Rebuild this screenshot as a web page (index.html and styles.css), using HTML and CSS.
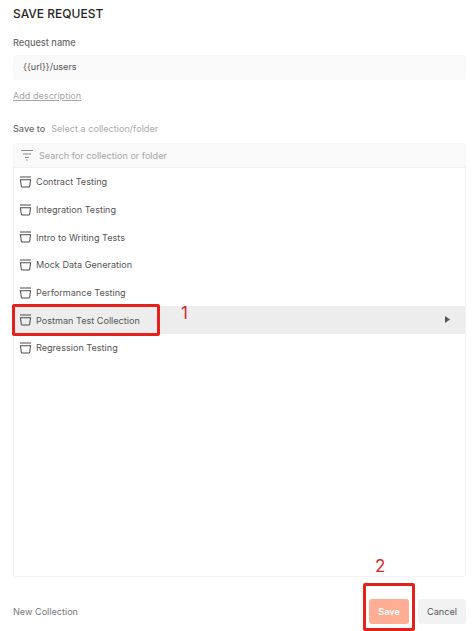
FILE: index.html
```html
<!DOCTYPE html>
<html lang="en">
<head>
<meta charset="utf-8">
<title>Save Request</title>
<link rel="stylesheet" href="styles.css">
</head>
<body>
<main class="dialog">
  <h1 class="title">SAVE REQUEST</h1>
  <label class="label">Request name</label>
  <div class="name-input">{{url}}/users</div>
  <a class="add-desc">Add description</a>
  <div class="save-to"><span class="save-label">Save to</span><span class="save-hint">Select a collection/folder</span></div>
  <section class="picker">
    <div class="search">
      <svg class="filter" width="14" height="12" viewBox="0 0 14 12"><path d="M1 1.5h12M3 5h8M5 8.5h4M6.2 11h1.6" fill="none" stroke="#8a8a8a" stroke-width="1"/></svg>
      <span>Search for collection or folder</span>
    </div>
    <ul class="list">
      <li class="row"><svg class="icon" viewBox="0 0 14 13"><path d="M1 1h12M1.5 4h11l-1 7.2a1 1 0 0 1-1 .8h-7a1 1 0 0 1-1-.8z" fill="none" stroke="#4d4d4d" stroke-width="1.1"/></svg>Contract Testing</li>
      <li class="row"><svg class="icon" viewBox="0 0 14 13"><path d="M1 1h12M1.5 4h11l-1 7.2a1 1 0 0 1-1 .8h-7a1 1 0 0 1-1-.8z" fill="none" stroke="#4d4d4d" stroke-width="1.1"/></svg>Integration Testing</li>
      <li class="row"><svg class="icon" viewBox="0 0 14 13"><path d="M1 1h12M1.5 4h11l-1 7.2a1 1 0 0 1-1 .8h-7a1 1 0 0 1-1-.8z" fill="none" stroke="#4d4d4d" stroke-width="1.1"/></svg>Intro to Writing Tests</li>
      <li class="row"><svg class="icon" viewBox="0 0 14 13"><path d="M1 1h12M1.5 4h11l-1 7.2a1 1 0 0 1-1 .8h-7a1 1 0 0 1-1-.8z" fill="none" stroke="#4d4d4d" stroke-width="1.1"/></svg>Mock Data Generation</li>
      <li class="row"><svg class="icon" viewBox="0 0 14 13"><path d="M1 1h12M1.5 4h11l-1 7.2a1 1 0 0 1-1 .8h-7a1 1 0 0 1-1-.8z" fill="none" stroke="#4d4d4d" stroke-width="1.1"/></svg>Performance Testing</li>
      <li class="row selected"><svg class="icon" viewBox="0 0 14 13"><path d="M1 1h12M1.5 4h11l-1 7.2a1 1 0 0 1-1 .8h-7a1 1 0 0 1-1-.8z" fill="none" stroke="#4d4d4d" stroke-width="1.1"/></svg>Postman Test Collection<svg class="caret" width="5" height="7" viewBox="0 0 5 7"><path d="M0 0l5 3.5L0 7z" fill="#555"/></svg><span class="mark mark-row"></span><span class="num num-1">1</span></li>
      <li class="row"><svg class="icon" viewBox="0 0 14 13"><path d="M1 1h12M1.5 4h11l-1 7.2a1 1 0 0 1-1 .8h-7a1 1 0 0 1-1-.8z" fill="none" stroke="#4d4d4d" stroke-width="1.1"/></svg>Regression Testing</li>
    </ul>
  </section>
  <footer class="footer">
    <span class="new">New Collection</span>
    <div class="actions">
      <button class="btn save">Save<span class="mark mark-save"></span><span class="num num-2">2</span></button>
      <button class="btn cancel">Cancel</button>
    </div>
  </footer>
</main>
</body>
</html>
```
FILE: styles.css
```css
* { box-sizing: border-box; }
html, body { margin: 0; height: 100%; background: #fff; }
body { font-family: Inter, "Liberation Sans", sans-serif; color: #555; overflow: hidden; }
.dialog { width: 474px; height: 631px; padding: 6px 8px 0 13px; display: flex; flex-direction: column; }
.title { margin: 0; font-size: 12px; line-height: 15px; font-weight: 500; color: #262626; letter-spacing: 0; }
.label { margin-top: 15px; font-size: 9.2px; line-height: 14px; font-weight: 500; color: #6b6b6b; }
.name-input { margin-top: 5px; height: 25px; line-height: 24px; padding-left: 10px; background: #f9f9f9; border-radius: 3px; font-size: 9.1px; color: #555; }
.add-desc { margin-top: 9px; font-size: 9.1px; line-height: 14px; color: #a6a6a6; text-decoration: underline; }
.save-to { margin-top: 19px; font-size: 9.1px; line-height: 14px; }
.save-label { font-weight: 500; color: #6b6b6b; margin-right: 6px; }
.save-hint { color: #aaa; }
.picker { margin-top: 7px; height: 434px; border: 1px solid #f3f3f3; border-top: 0; border-radius: 3px; display: flex; flex-direction: column; }
.search { height: 25px; margin: 0 -1px; background: #f9f9f9; border-bottom: 1px solid #f1f1f1; display: flex; align-items: center; padding-left: 7px; gap: 5px; font-size: 9.1px; color: #a6a6a6; flex: none; border-radius: 3px 3px 0 0; }
.filter { flex: none; }
.list { list-style: none; margin: 0; padding: 0; }
.row { position: relative; height: 27.7px; display: flex; align-items: center; padding-left: 5px; gap: 4px; font-size: 9.1px; color: #555; }
.icon { width: 13px; height: 12px; flex: none; }
.selected { background: #ededed; }
.caret { position: absolute; right: 15px; top: 10px; }
.mark { position: absolute; border: 3px solid #e3201b; border-radius: 2px; pointer-events: none; }
.mark-row { left: -2px; top: -2px; width: 148px; height: 32px; }
.num { position: absolute; color: #d9282a; font-size: 17px; line-height: 18px; font-weight: 400; }
.num-1 { left: 167px; top: -2px; }
.footer { flex: 1; display: flex; align-items: center; justify-content: space-between; padding-top: 15px; }
.new { font-size: 9.1px; color: #777; }
.actions { display: flex; gap: 9px; }
.btn { position: relative; height: 25px; border: 0; border-radius: 3px; font-family: inherit; font-size: 9.1px; padding: 0; }
.save { width: 40px; background: #fdae94; color: #fff; font-weight: 600; }
.cancel { width: 48px; background: #f2f2f2; color: #555; }
.mark-save { left: -6px; top: -16px; width: 52px; height: 48px; }
.num-2 { left: 6px; top: -42px; }
```
